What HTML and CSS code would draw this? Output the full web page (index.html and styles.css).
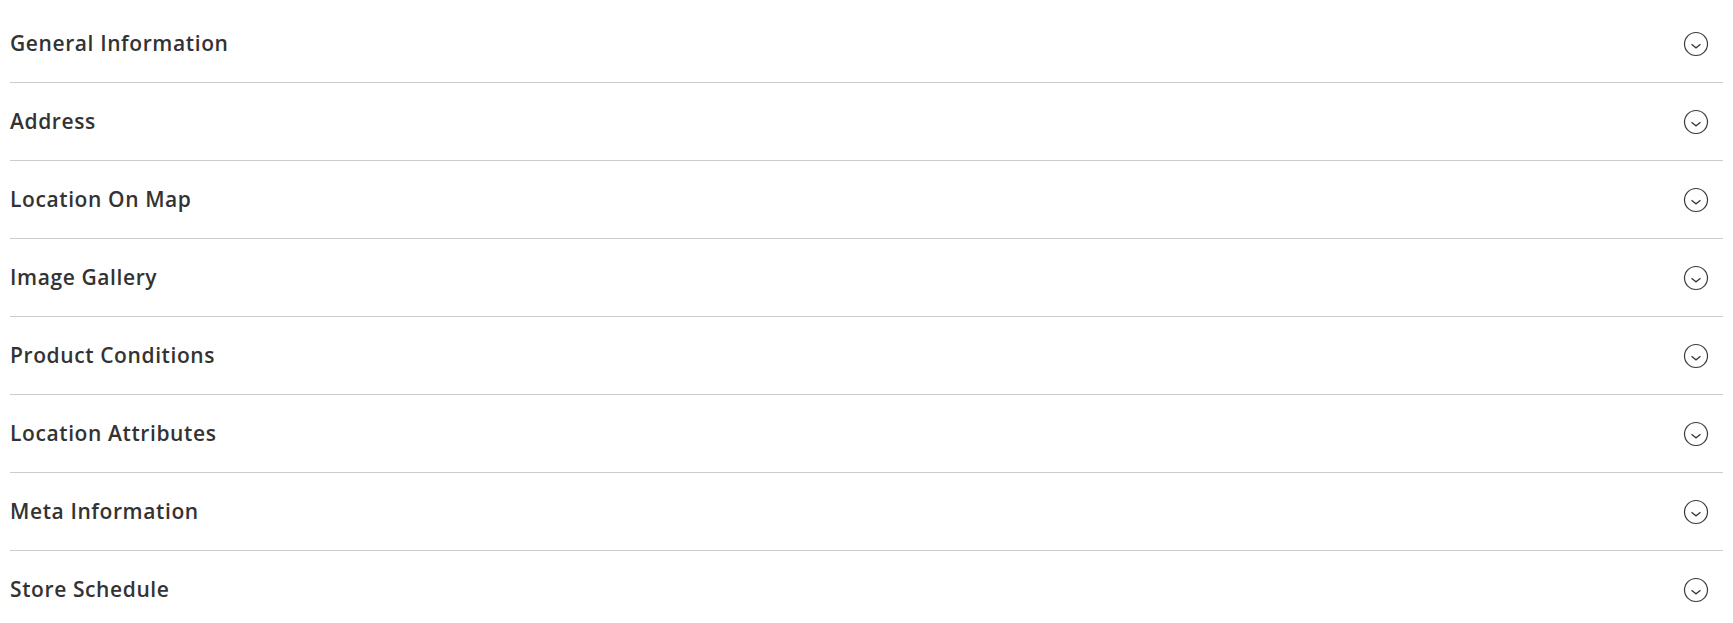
FILE: index.html
```html
<!DOCTYPE html>
<html lang="en">
<head>
    <meta charset="UTF-8">
    <meta name="viewport" content="width=device-width, initial-scale=1.0">
    <title>Store Location</title>
    <link rel="stylesheet" href="styles.css">
</head>
<body>

    <div class="sections">
        <div class="section"><span class="title">General Information</span><span class="toggle"></span></div>
        <div class="section"><span class="title">Address</span><span class="toggle"></span></div>
        <div class="section"><span class="title">Location On Map</span><span class="toggle"></span></div>
        <div class="section"><span class="title">Image Gallery</span><span class="toggle"></span></div>
        <div class="section"><span class="title">Product Conditions</span><span class="toggle"></span></div>
        <div class="section"><span class="title">Location Attributes</span><span class="toggle"></span></div>
        <div class="section"><span class="title">Meta Information</span><span class="toggle"></span></div>
        <div class="section"><span class="title">Store Schedule</span><span class="toggle"></span></div>
    </div>

    <script>
        // same chevron icon for every section
        let icon = '<svg width="26" height="26" viewBox="0 0 26 26"><circle cx="13" cy="13" r="11.5" fill="none" stroke="#3a3a3a" stroke-width="1.2"/><path d="M8.5 13.2 L13 16.8 L17.5 13.2" fill="none" stroke="#3a3a3a" stroke-width="1.3"/></svg>';
        document.querySelectorAll(".toggle").forEach(t => t.innerHTML = icon);
    </script>
</body>
</html>
```
FILE: styles.css
```css
body {
    font-family: "Open Sans", Arial, sans-serif;
    margin: 0;
    padding: 0;
    background: #fff;
}

.sections {
    padding: 5px 10px 0 10px;
}

.section {
    display: flex;
    justify-content: space-between;
    align-items: center;
    height: 77px;
    border-bottom: 1px solid #cccccc;
    cursor: pointer;
}

.section:last-child {
    border-bottom: none;
}

.title {
    font-size: 21px;
    font-weight: 600;
    color: #333333;
    letter-spacing: 0.6px;
    padding-bottom: 2px;
}

.toggle {
    display: flex;
    margin-right: 14px;
}
```
